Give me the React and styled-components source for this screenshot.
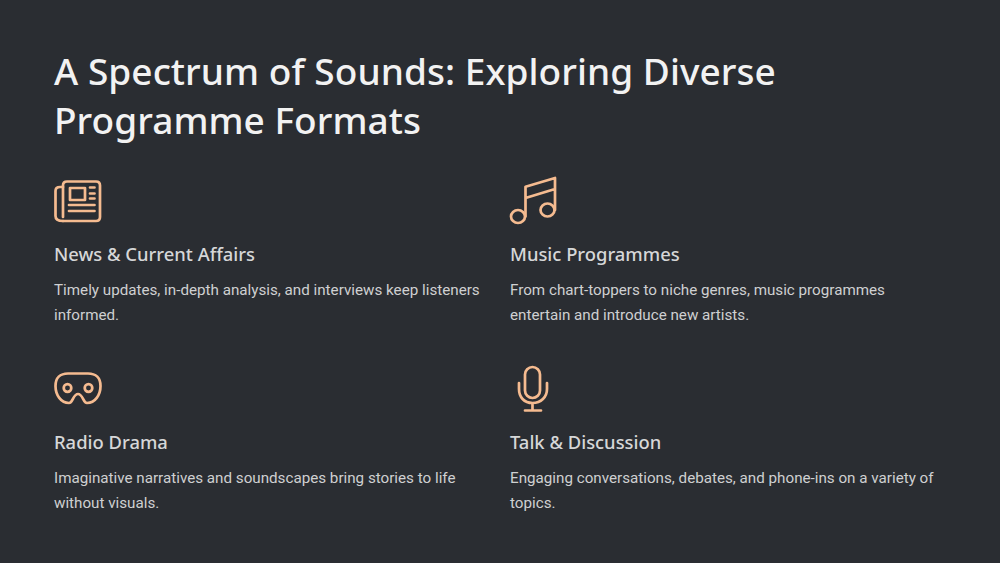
import React from 'react';
import styled, { createGlobalStyle } from 'styled-components';

const GlobalStyle = createGlobalStyle`
  html, body {
    margin: 0;
    padding: 0;
    background: #2a2d32;
  }
`;

const NewsIcon = () => (
  <Icon viewBox="0 0 48 48">
    <path d="M9 41 H42 C44.500 41 46 39.500 46 37 V5.500 C46 3 44.500 1.500 42 1.500 H13 C10.500 1.500 9 3 9 5.500 V37" />
    <path d="M9 7 H6 C3 7 1.500 8.500 1.500 11 V36 C1.500 39 4 41 9 41" />
    <rect x="16" y="8" width="15" height="12" />
    <path d="M36 7.500 H40.500 M36 13.500 H40.500 M36 18.500 H40.500 M15 25 H40.500 M15 31 H40.500" />
  </Icon>
);

const MusicIcon = () => (
  <Icon viewBox="0 0 48 48">
    <ellipse cx="8" cy="36.500" rx="7" ry="6.500" />
    <ellipse cx="37.500" cy="30" rx="7" ry="6.500" />
    <path d="M15.500 36.500 V6.700 L45 -2 V30 M15.500 18 L45 9" />
  </Icon>
);

const MaskIcon = () => (
  <Icon viewBox="0 0 48 48">
    <path d="M14 5.500 H34 C42 5.500 46.500 10 46.500 18 C46.500 27 41 35 33 35 C29 35 29 26 24 26 C19 26 19 35 15 35 C7 35 1.500 27 1.500 18 C1.500 10 6 5.500 14 5.500 Z" />
    <circle cx="13.500" cy="20" r="3.800" />
    <circle cx="34.500" cy="20" r="3.800" />
  </Icon>
);

const MicIcon = () => (
  <Icon viewBox="0 0 48 48">
    <rect x="15" y="-1" width="15" height="31" rx="7.500" />
    <path d="M9 15 V21 C9 29 14 35 22.500 35 C31 35 37 29 37 21 V15 M22.500 35 V42.500 M15 42.500 H31" />
  </Icon>
);

const features = [
  {
    icon: NewsIcon,
    title: 'News & Current Affairs',
    text: 'Timely updates, in-depth analysis, and interviews keep listeners informed.',
  },
  {
    icon: MusicIcon,
    title: 'Music Programmes',
    text: 'From chart-toppers to niche genres, music programmes entertain and introduce new artists.',
  },
  {
    icon: MaskIcon,
    title: 'Radio Drama',
    text: 'Imaginative narratives and soundscapes bring stories to life without visuals.',
  },
  {
    icon: MicIcon,
    title: 'Talk & Discussion',
    text: 'Engaging conversations, debates, and phone-ins on a variety of topics.',
  },
];

export default function App() {
  return (
    <>
      <GlobalStyle />
      <Slide>
        <Heading>A Spectrum of Sounds: Exploring Diverse Programme Formats</Heading>
        <FeatureGrid>
          {features.map((item) => (
            <Feature key={item.title}>
              <item.icon />
              <FeatureTitle>{item.title}</FeatureTitle>
              <FeatureText>{item.text}</FeatureText>
            </Feature>
          ))}
        </FeatureGrid>
      </Slide>
    </>
  );
}

const Slide = styled.div`
  box-sizing: border-box;
  width: 1000px;
  height: 563px;
  padding: 46px 54px 0;
  background: #2a2d32;
  overflow: hidden;
`;

const Heading = styled.h1`
  margin: 0;
  width: 800px;
  font-family: 'Noto Sans', 'Open Sans', sans-serif;
  font-size: 37px;
  font-weight: 500;
  letter-spacing: 0.05px;
  line-height: 49px;
  color: #f2f2f2;
`;

const FeatureGrid = styled.div`
  display: grid;
  grid-template-columns: 456px 456px;
  row-gap: 40px;
  margin-top: 36px;
`;

const Feature = styled.div`
  display: flex;
  flex-direction: column;
  align-items: flex-start;
`;

const Icon = styled.svg`
  width: 48px;
  height: 48px;
  overflow: visible;
  fill: none;
  stroke: #f5bb90;
  stroke-width: 2.7;
  stroke-linecap: round;
  stroke-linejoin: round;
`;

const FeatureTitle = styled.h2`
  margin: 13px 0 0;
  font-family: 'Noto Sans', 'Open Sans', sans-serif;
  font-size: 18.4px;
  font-weight: 500;
  line-height: 26px;
  color: #d6d7d8;
`;

const FeatureText = styled.p`
  margin: 11px 0 0;
  width: 430px;
  font-family: Roboto, sans-serif;
  font-size: 15.2px;
  line-height: 25px;
  color: #cfd0d1;
`;
